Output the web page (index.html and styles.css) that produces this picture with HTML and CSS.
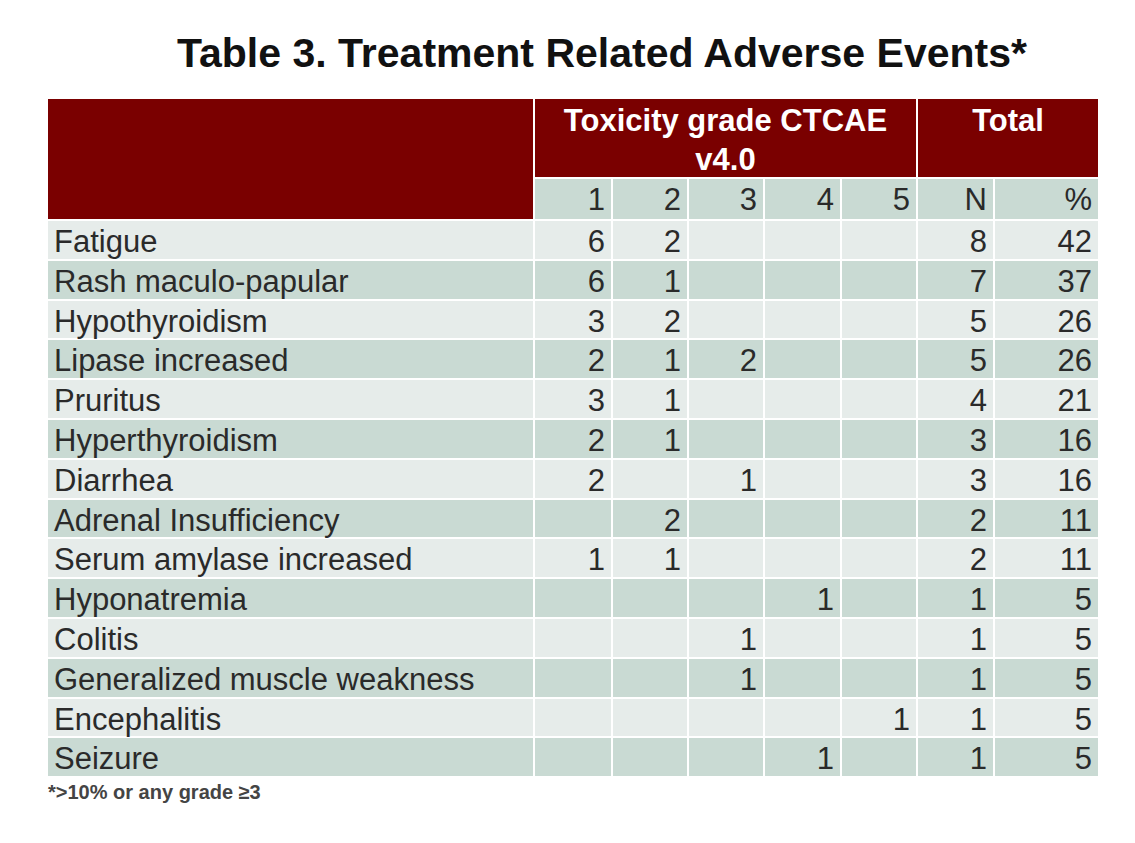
FILE: index.html
```html
<!DOCTYPE html>
<html>
<head>
<meta charset="utf-8">
<link rel="stylesheet" href="styles.css">
</head>
<body>
<div class="page">
  <h1 class="title">Table 3. Treatment Related Adverse Events*</h1>
  <div class="grid">
    <div class="hd hd-blank"></div>
    <div class="hd hd-tox">Toxicity grade CTCAE<br>v4.0</div>
    <div class="hd hd-total">Total</div>

    <div class="c d">1</div><div class="c d">2</div><div class="c d">3</div><div class="c d">4</div><div class="c d">5</div><div class="c d">N</div><div class="c d">%</div>

    <div class="l">Fatigue</div><div class="c">6</div><div class="c">2</div><div class="c"></div><div class="c"></div><div class="c"></div><div class="c">8</div><div class="c">42</div>
    <div class="l d">Rash maculo-papular</div><div class="c d">6</div><div class="c d">1</div><div class="c d"></div><div class="c d"></div><div class="c d"></div><div class="c d">7</div><div class="c d">37</div>
    <div class="l">Hypothyroidism</div><div class="c">3</div><div class="c">2</div><div class="c"></div><div class="c"></div><div class="c"></div><div class="c">5</div><div class="c">26</div>
    <div class="l d">Lipase increased</div><div class="c d">2</div><div class="c d">1</div><div class="c d">2</div><div class="c d"></div><div class="c d"></div><div class="c d">5</div><div class="c d">26</div>
    <div class="l">Pruritus</div><div class="c">3</div><div class="c">1</div><div class="c"></div><div class="c"></div><div class="c"></div><div class="c">4</div><div class="c">21</div>
    <div class="l d">Hyperthyroidism</div><div class="c d">2</div><div class="c d">1</div><div class="c d"></div><div class="c d"></div><div class="c d"></div><div class="c d">3</div><div class="c d">16</div>
    <div class="l">Diarrhea</div><div class="c">2</div><div class="c"></div><div class="c">1</div><div class="c"></div><div class="c"></div><div class="c">3</div><div class="c">16</div>
    <div class="l d">Adrenal Insufficiency</div><div class="c d"></div><div class="c d">2</div><div class="c d"></div><div class="c d"></div><div class="c d"></div><div class="c d">2</div><div class="c d">11</div>
    <div class="l">Serum amylase increased</div><div class="c">1</div><div class="c">1</div><div class="c"></div><div class="c"></div><div class="c"></div><div class="c">2</div><div class="c">11</div>
    <div class="l d">Hyponatremia</div><div class="c d"></div><div class="c d"></div><div class="c d"></div><div class="c d">1</div><div class="c d"></div><div class="c d">1</div><div class="c d">5</div>
    <div class="l">Colitis</div><div class="c"></div><div class="c"></div><div class="c">1</div><div class="c"></div><div class="c"></div><div class="c">1</div><div class="c">5</div>
    <div class="l d">Generalized muscle weakness</div><div class="c d"></div><div class="c d"></div><div class="c d">1</div><div class="c d"></div><div class="c d"></div><div class="c d">1</div><div class="c d">5</div>
    <div class="l">Encephalitis</div><div class="c"></div><div class="c"></div><div class="c"></div><div class="c"></div><div class="c">1</div><div class="c">1</div><div class="c">5</div>
    <div class="l d">Seizure</div><div class="c d"></div><div class="c d"></div><div class="c d"></div><div class="c d">1</div><div class="c d"></div><div class="c d">1</div><div class="c d">5</div>
  </div>
  <p class="note">*&gt;10% or any grade ≥3</p>
</div>
</body>
</html>
```
FILE: styles.css
```css
html, body {
  margin: 0;
  padding: 0;
  background: #ffffff;
}
.page {
  width: 1135px;
  height: 843px;
  padding: 0 0 0 48px;
  box-sizing: border-box;
  font-family: "Liberation Sans", Arial, sans-serif;
  color: #2a2a2a;
}
.title {
  margin: 0;
  width: 1108px;
  padding-top: 30px;
  height: 68px;
  box-sizing: border-box;
  text-align: center;
  font-size: 41px;
  line-height: 46px;
  font-weight: bold;
  color: #111111;
}
.grid {
  display: grid;
  width: 1050px;
  grid-template-columns: 485px 76px 74px 74px 75px 74px 75px 103px;
  grid-template-rows: 78px 40px repeat(14, 37.8px);
  column-gap: 2px;
  row-gap: 2px;
  margin-top: 31px;
}
.hd {
  background: #7a0000;
  color: #ffffff;
  font-weight: bold;
  font-size: 31px;
  line-height: 39px;
  padding-top: 2px;
  text-align: center;
}
.hd-blank {
  grid-row: 1 / span 2;
}
.hd-tox {
  grid-column: 2 / span 5;
}
.hd-total {
  grid-column: 7 / span 2;
}
.l, .c {
  background: #e6ecea;
  font-size: 31px;
  line-height: 38px;
  padding-top: 2px;
  white-space: nowrap;
}
.l {
  padding-left: 6px;
}
.c {
  text-align: right;
  padding-right: 6px;
}
.d {
  background: #c9dad3;
}
.note {
  margin: 5px 0 0 0;
  font-size: 20px;
  font-weight: bold;
  color: #444444;
}
```
